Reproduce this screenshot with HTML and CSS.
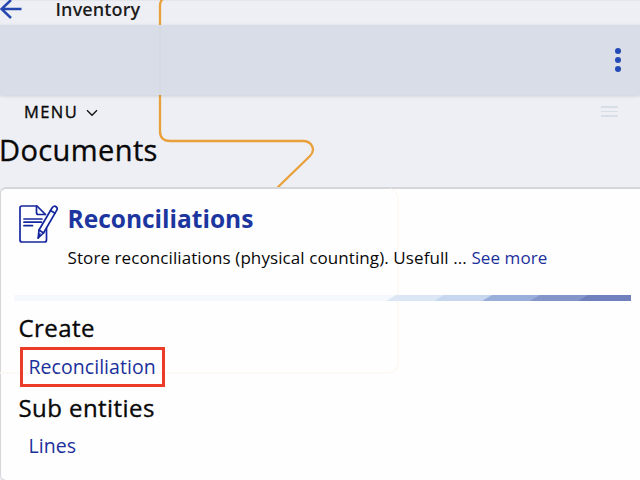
FILE: index.html
```html
<!DOCTYPE html>
<html lang="en">
<head>
<meta charset="utf-8">
<title>Inventory</title>
<link rel="stylesheet" href="styles.css">
</head>
<body>
<svg class="backdrop" width="640" height="480" viewBox="0 0 640 480" fill="none" aria-hidden="true">
  <path d="M163 -1Q160 1 160 6V131Q160 141 170 141H303C312 141 316 150 310 156L277 188" stroke="#e9a03b" stroke-width="2.3"/>
</svg>
<header class="topbar">
  <svg class="back" width="24" height="22" viewBox="0 0 24 22" fill="none" stroke="#2648ae" stroke-width="2.5"><path d="M22.500 11H2.500M12 2L2.500 11L12 20"/></svg>
  <span class="title">Inventory</span>
</header>
<div class="toolbar">
  <span class="dots"><i></i><i></i><i></i></span>
</div>
<nav class="menu">
  <span class="menu-label">MENU</span>
  <svg class="chevron" width="12" height="8" viewBox="0 0 12 8" fill="none" stroke="#111" stroke-width="1.3"><path d="M1 1.2L6 6.3L11 1.2"/></svg>
  <span class="lines"><i></i><i></i><i></i></span>
</nav>
<h1>Documents</h1>
<main class="card">
  <svg class="ghost" width="640" height="292" viewBox="0 188 640 292" fill="none" stroke="#fdf8f2" stroke-width="1.6" aria-hidden="true"><path d="M390 189Q398 190 398 200V362Q398 373 387 373H0"/></svg>
  <section class="summary">
    <svg class="icon" width="40" height="40" viewBox="0 0 40 40" fill="none" stroke="#14279f" stroke-width="1.7" stroke-linecap="round" stroke-linejoin="round">
      <path d="M28.500 24V36Q28.500 38 26.500 38H4Q2 38 2 36V4Q2 2 4 2H19L27.5 10.5"/>
      <path d="M18.5 2V8.5Q18.5 10.5 20.5 10.5H26.5"/>
      <path d="M6 15H24M6 18.2H23.500M6 21.700H14.5"/>
      <path d="M21 26L34 4Q36 1 38.300 3Q40 4.500 38.500 6.600L25.500 29L20.200 34Z" fill="#fff"/>
      <path d="M32.500 6.500L37 9.200M21 26L25.500 29M20.200 34L22 30"/>
    </svg>
    <div>
      <h2>Reconciliations</h2>
      <p>Store reconciliations (physical counting). Usefull ... <a class="more">See more</a></p>
    </div>
  </section>
  <svg class="divider" width="617" height="6" viewBox="0 0 617 6" aria-hidden="true">
    <path d="M0 0H617V6H0Z" fill="#f5f8fd"/>
    <path d="M382 0H617V6H372Z" fill="#dce7f6"/>
    <path d="M430 0H617V6H420Z" fill="#c6d7ef"/>
    <path d="M478 0H617V6H468Z" fill="#99afd9"/>
    <path d="M526 0H617V6H516Z" fill="#8496c9"/>
    <path d="M574 0H617V6H564Z" fill="#6f80bc"/>
  </svg>
  <h3 class="create">Create</h3>
  <a class="link marked">Reconciliation</a>
  <h3 class="sub">Sub entities</h3>
  <a class="link">Lines</a>
</main>
</body>
</html>
```

FILE: styles.css
```css
* { box-sizing: border-box; }
body {
  margin: 0;
  width: 640px;
  height: 480px;
  overflow: hidden;
  position: relative;
  background: #eeeff4;
  color: #080808;
  font-family: "Open Sans", "Noto Sans", sans-serif;
}
h1, h2, h3, p { margin: 0; font-weight: 500; white-space: nowrap; }
h1, h3, .menu-label { -webkit-text-stroke: .35px currentColor; }
.backdrop { position: absolute; top: 0; left: 0; }
.topbar {
  height: 25px;
  display: flex;
  align-items: flex-start;
  border-top: 1px solid #e5e6eb;
}
.back { margin: -3px 0 0 -1px; flex: none; }
.title { margin-left: 32.5px; margin-top: -1px; font-size: 18px; font-weight: 600; letter-spacing: .1px; line-height: 18px; color: #1c1c1c; }
.toolbar {
  position: relative;
  height: 70px;
  padding-right: 19px;
  display: flex;
  justify-content: flex-end;
  align-items: center;
  background: rgba(215, 220, 230, .97);
  box-shadow: 0 1px 3px rgba(100, 110, 125, .25);
}
.dots { display: grid; gap: 3px; }
.dots i { width: 6px; height: 6px; border-radius: 50%; background: #2249b5; }
.menu { height: 34px; padding: 0 22px 0 24px; display: flex; align-items: center; }
.menu-label { font-size: 16.5px; font-weight: 500; letter-spacing: 1.4px; margin-top: -1px; }
.chevron { margin-left: 8px; margin-top: 2px; }
.lines { margin-left: auto; margin-top: -1px; display: grid; gap: 3px; }
.lines i { width: 17px; height: 1.5px; background: #d8dee5; }
h1 { height: 58px; line-height: 42px; font-size: 29px; letter-spacing: .4px; margin-left: -1px; }
.card {
  position: relative;
  height: 294px;
  width: 650px;
  padding-left: 14px;
  background: #fefefe;
  border: 1px solid #d5d6d9;
  border-top-width: 2px;
  border-radius: 6px;
}
.ghost { position: absolute; left: -1px; top: -1px; }
.summary { position: relative; display: flex; height: 106px; padding: 15px 0 0 3px; gap: 9.5px; }
.icon { flex: none; }
h2 { font-size: 24.5px; font-weight: 700; line-height: 30px; color: #1d369f; }
p { margin-top: 12px; font-size: 17px; font-weight: 400; line-height: 24px; letter-spacing: .09px; }
.more, .link { color: #1b309b; }
.divider { display: block; position: relative; margin-left: -1px; }
h3 { font-size: 24px; line-height: 32px; letter-spacing: .43px; margin-left: 3.5px; }
.create { margin-top: 11px; }
.link { position: relative; display: block; width: max-content; margin-left: 13.5px; font-size: 19.5px; line-height: 34px; letter-spacing: .05px; }
.marked { margin: 3px 0 0 5px; padding: 0 5.5px; width: 145px; height: 40px; line-height: 33px; border: 3px solid #eb3c29; }
.sub { margin-top: 5px; margin-bottom: 5px; }
```
